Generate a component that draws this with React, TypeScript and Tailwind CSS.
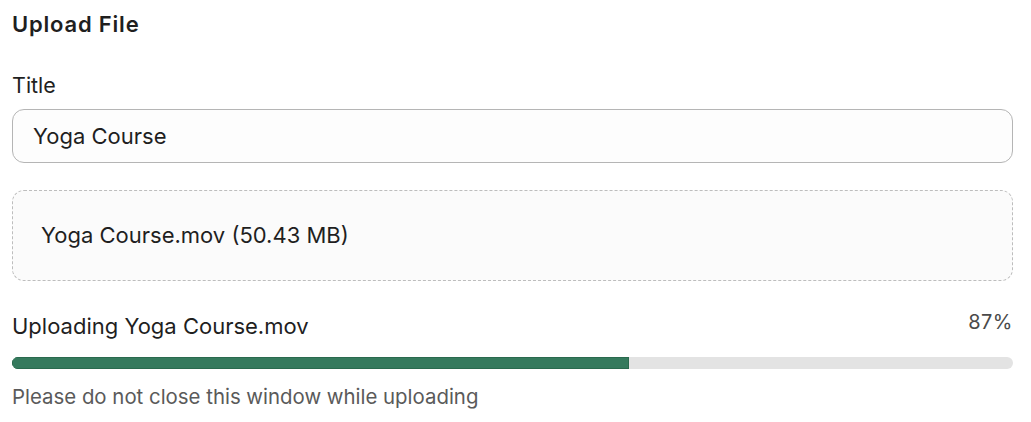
import React from "react";

export default function App() {
  const progress = 61.6;
  return (
    <div className="w-[1031px] h-[422px] bg-white px-3 pt-[10px] text-[#1f1f1f]" style={{ fontFamily: "Inter, 'Noto Sans', sans-serif" }}>
      <div className="w-[1001px] flex flex-col">
        <h1 className="text-[22px] leading-[28px] font-semibold tracking-[0.8px]">Upload File</h1>
        <label className="mt-[34px] text-[21.5px] leading-[26px]">Title</label>
        <div className="mt-[11px] h-[54px] rounded-[12px] border border-[#b5b5b5] bg-[#fdfdfd] flex items-center px-5 text-[22px]">
          Yoga Course
        </div>
        <div className="mt-[27px] h-[91px] rounded-[12px] border border-dashed border-[#bdbdbd] bg-[#fbfbfb] flex items-center px-7 text-[22px]">
          Yoga Course.mov (50.43 MB)
        </div>
        <div className="mt-[32px] flex justify-between items-start text-[22px] leading-[26px]">
          <span>Uploading Yoga Course.mov</span>
          <span className="text-[#4a4a4a] text-[20px] tracking-[0.5px] relative -top-[4px]">87%</span>
        </div>
        <div className="mt-[18px] h-[12px] rounded-full bg-[#e3e3e3] overflow-hidden">
          <div className="h-full bg-[#357a5d] border border-[#2a6a4e]" style={{ width: `${progress}%` }} />
        </div>
        <p className="mt-[16px] text-[20.4px] leading-[24px] text-[#5a5a5a]">Please do not close this window while uploading</p>
      </div>
    </div>
  );
}
